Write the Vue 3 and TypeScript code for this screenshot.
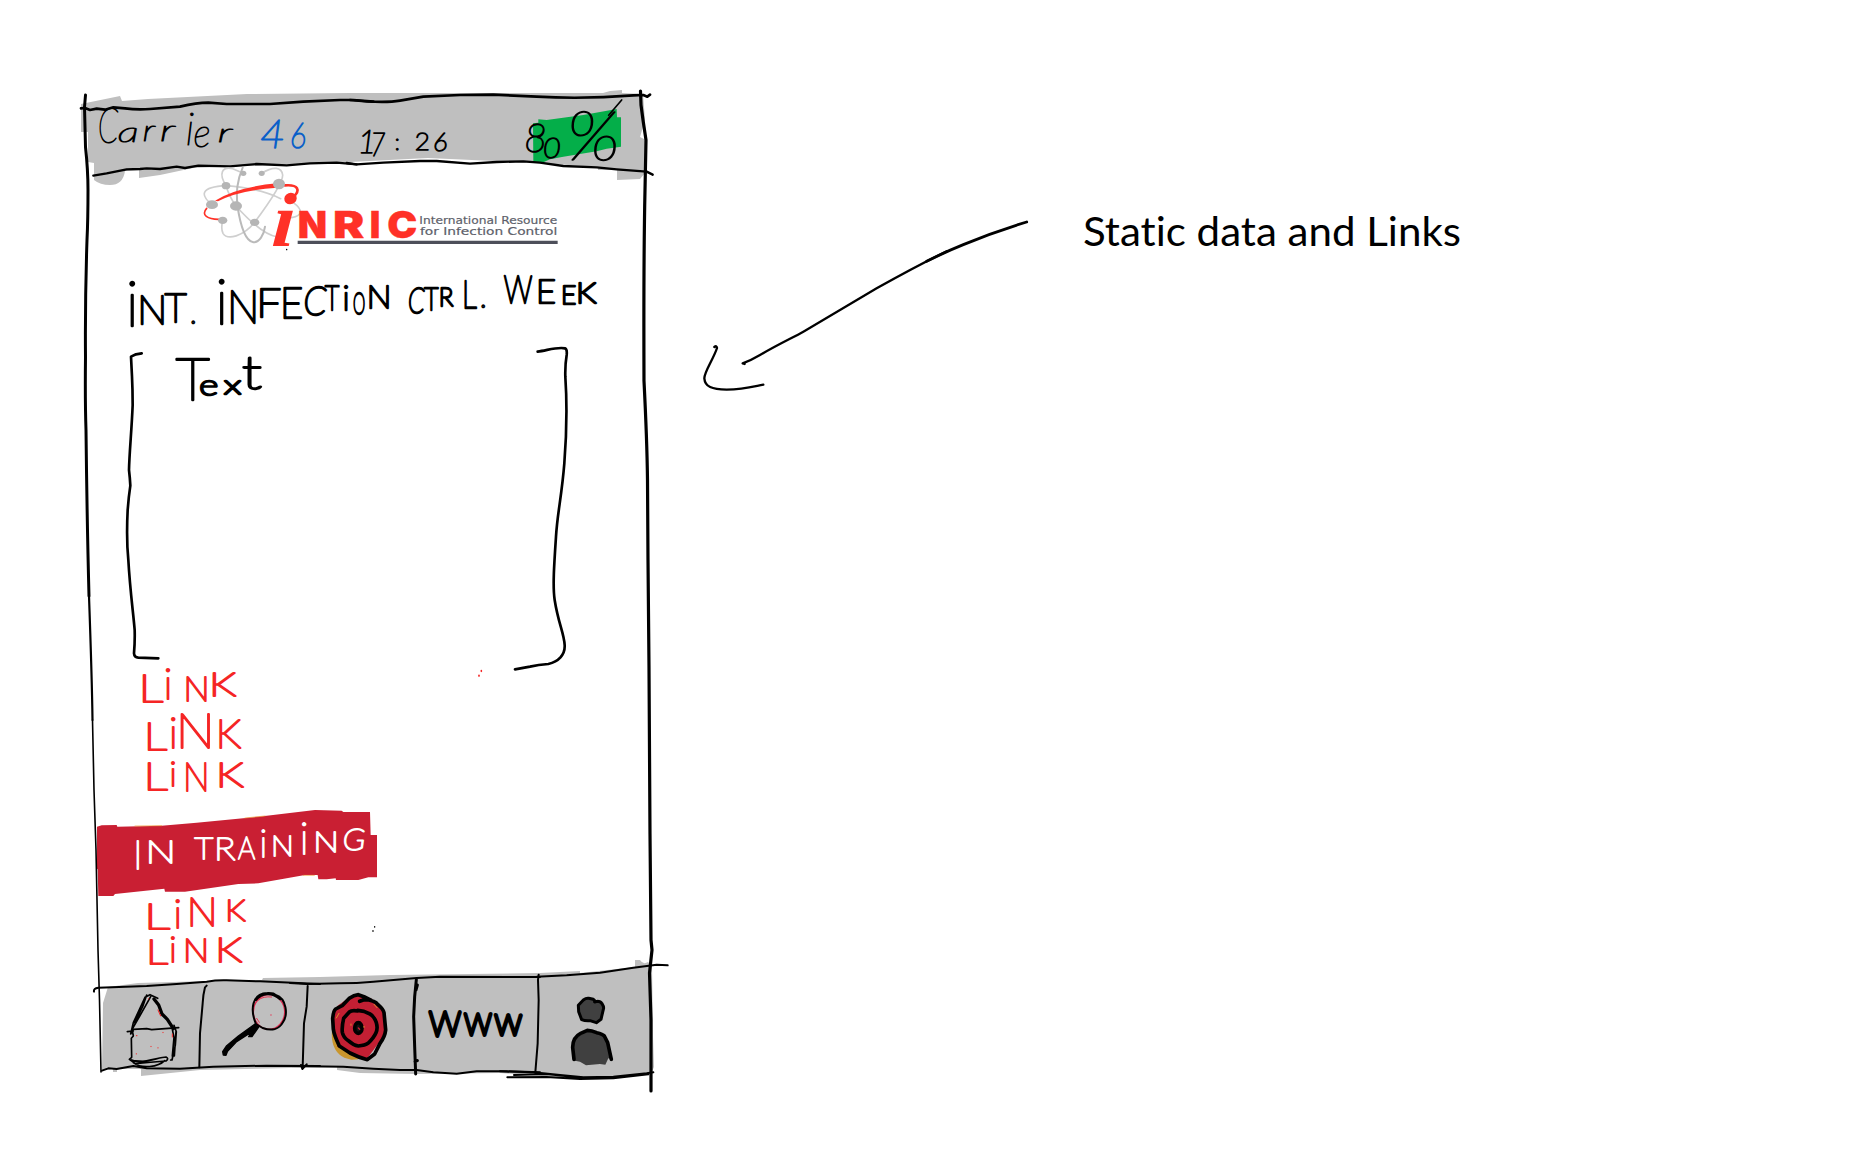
<script setup lang="ts">
import { h } from 'vue'

// One handwritten letter: character, the box its ink fills (left, right, top, bottom), slant.
type Glyph = [string, number, number, number, number, boolean?]
type Line = { pen: number; color: string; weight?: number; glyphs: Glyph[] }

const FAMILY = 'Lato, "Noto Sans", sans-serif'
const probe = document.createElement('canvas').getContext('2d')!

// Turns an ink box into the font size, origin and advance that fill it.
function fit([ch, left, right, top, bottom, slant]: Glyph, line: Line) {
  const half = line.pen / 2
  const l = left + half, r = Math.max(right - half, left + half + 1), t = top + half, b = bottom - half
  probe.font = `${slant ? 'italic ' : ''}${line.weight ?? 100} 200px ${FAMILY}`
  const m = probe.measureText(ch)
  const size = ((b - t) / (m.actualBoundingBoxAscent + m.actualBoundingBoxDescent)) * 200
  const k = size / 200
  const narrow = 'iI1.:'.includes(ch)
  const sx = narrow ? k : (r - l) / (m.actualBoundingBoxRight + m.actualBoundingBoxLeft)
  const inkMid = (m.actualBoundingBoxRight - m.actualBoundingBoxLeft) / 2
  return {
    x: (l + r) / 2 - inkMid * sx,
    y: b - m.actualBoundingBoxDescent * k,
    'font-size': size,
    'font-style': slant ? 'italic' : 'normal',
    textLength: m.width * sx,
    lengthAdjust: 'spacingAndGlyphs',
  }
}

const Ink = (props: { line: Line }) =>
  h(
    'text',
    {
      'font-family': FAMILY,
      'font-weight': props.line.weight ?? 100,
      fill: props.line.color,
      stroke: props.line.color,
      'stroke-width': props.line.pen,
      'stroke-linejoin': 'round',
      style: 'white-space: pre',
    },
    props.line.glyphs.map((g) => (g[0] === ' ' ? h('tspan', ' ') : h('tspan', fit(g, props.line), g[0]))),
  )
Ink.props = ['line']

const gap: Glyph = [' ', 0, 0, 0, 0]
const black = '#000'
const red = '#f52525'

const carrier: Line = {
  pen: 3.5, color: black, glyphs: [
    ['C', 88, 146, 78, 192, true], ['a', 147, 200, 143, 188, true], ['r', 222, 258, 138, 186, true], ['r', 275, 318, 138, 186, true],
    ['i', 345, 378, 97, 197, true], ['e', 374, 418, 136, 202, true], ['r', 448, 490, 143, 187, true],
  ],
}
const network: Line = { pen: 5, color: '#0a5fc9', glyphs: [['4', 573, 640, 117, 208, true], ['6', 664, 706, 124, 208, true]] }
const clock: Line = {
  pen: 4.5, color: black, glyphs: [
    ['1', 38, 62, 148, 222, true], ['7', 68, 106, 156, 230, true], [':', 134, 150, 178, 214], ['2', 197, 236, 155, 212], ['6', 253, 290, 157, 215, true],
  ],
}
const battery: Line = {
  pen: 4.5, color: black, glyphs: [['8', 528, 584, 128, 220, true], ['0', 582, 630, 173, 238, true], ['%', 664, 798, 92, 242, true]],
}
const title: Line = {
  pen: 7.5, color: black, glyphs: [
    ['i', 60, 74, 46, 186], ['N', 92, 162, 88, 182], ['T', 162, 232, 80, 174], ['.', 243, 256, 166, 178], gap,
    ['i', 327, 343, 41, 180], ['N', 362, 437, 73, 178], ['F', 450, 512, 68, 160], ['E', 520, 577, 68, 163],
    ['C', 584, 652, 62, 156, true], ['T', 642, 690, 62, 140], ['i', 702, 715, 58, 138], ['O', 728, 766, 80, 150], ['N', 778, 837, 58, 134], gap,
    ['C', 895, 946, 63, 149, true], ['T', 940, 988, 66, 140], ['R', 991, 1032, 63, 126], ['L', 1062, 1102, 43, 132], ['.', 1113, 1127, 119, 131], gap,
    ['W', 1180, 1268, 32, 119], ['E', 1286, 1336, 42, 119], ['E', 1358, 1398, 58, 120], ['K', 1406, 1461, 53, 118],
  ],
}
const body: Line = {
  pen: 7.5, color: black, glyphs: [['T', 195, 300, 278, 410], ['e', 271, 323, 344, 394], ['x', 342, 394, 343, 390], ['t', 398, 456, 276, 376]],
}
const link = (...boxes: number[][]): Line => ({
  pen: 6.5, color: red, glyphs: ['L', 'i', 'N', 'K'].map((c, n) => [c, ...boxes[n]] as Glyph),
})
const infoLinks = [
  link([99, 160, 73, 159], [165, 184, 56, 150], [229, 290, 75, 155], [309, 379, 66, 142]),
  link([114, 172, 218, 303], [183, 197, 204, 298], [212, 300, 190, 297], [328, 394, 206, 296]),
  link([114, 174, 336, 422], [183, 196, 333, 412], [228, 290, 334, 427], [330, 402, 335, 414]),
]
const trainingLinks = [
  link([192, 256, 335, 419], [268, 288, 324, 417], [316, 387, 319, 411], [429, 483, 328, 397]),
  link([195, 250, 446, 524], [258, 270, 437, 518], [303, 364, 443, 519], [402, 472, 441, 520]),
]
const training: Line = {
  pen: 5.5, color: '#fff', glyphs: [
    ['I', 152, 165, 150, 239], ['N', 193, 262, 150, 222], gap, ['T', 327, 386, 141, 209], ['R', 397, 452, 142, 213], ['A', 458, 512, 140, 211],
    ['i', 525, 545, 118, 203], ['N', 566, 619, 135, 200], ['i', 648, 668, 95, 196], ['N', 694, 753, 124, 190], ['G', 777, 839, 113, 184, true],
  ],
}
const www: Line = { pen: 12, color: black, glyphs: [['W', 414, 516, 179, 264], ['W', 519, 608, 185, 260], ['W', 611, 699, 189, 260]] }
</script>

<template>
  <main class="board">
    <section class="phone">
      <div class="screen">
        <header>
          <svg width="680" height="85" viewBox="0 80 680 85">
            <path fill="#bfbfbf" d="M81 104 L120 96 L122 101 L148 99 L247 94 L350 93 L603 93 L610 91 L622 90 L622 93 L643 94 L645 120 L640 137 L646 140 L645 173 L640 179 L617 180 L617 170 L598 170 L598 167 L537 163 L428 158 L350 162 L193 168 L160 175 L139 178 L139 170 L125 171 Q123 185 110 185 Q100 185 94 180 L94 163 L88 162 L88 132 L81 132Z" />
            <g transform="translate(70 80) scale(.33333)" class="pen">
              <path stroke-width="8" d="M33 85 L45 84 L60 90 L80 86 L105 89 L130 82 L165 85 Q200 90 240 87 L330 80 Q380 68 415 68 L470 72 L600 72 L700 65 L810 60 L850 60 L910 65" />
              <path stroke-width="7" d="M70 287 L110 280 L170 268 L210 267 L230 265 L270 267 L320 260 L345 264 L385 257 L480 259 L560 252 L650 256 L720 250 L800 248 L860 253" />
              <Ink :line="carrier" /><Ink :line="network" />
            </g>
            <g transform="translate(350 80) scale(.33333)" class="pen">
              <path fill="#04ae49" stroke="none" d="M549 130 L565 128 L565 118 L590 120 L700 105 L800 87 L801 112 L813 112 L813 200 L770 206 L740 214 L640 230 L600 238 L580 247 L550 245Z" />
              <path stroke-width="8" d="M0 60 Q100 70 150 62 L220 50 L330 45 L430 44 L560 50 Q700 58 850 46 L880 45 L892 50 L900 44" />
              <path stroke-width="7" d="M-10 249 L20 253 L100 248 L210 243 L260 243 L360 251 L440 246 L520 244 L570 248 L640 258 L740 262 L800 268 L890 275 L908 284" />
              <Ink :line="clock" /><Ink :line="battery" />
              <path stroke-width="5" d="M776 106 L815 60" />
            </g>
          </svg>
        </header>

        <div class="brand">
          <svg width="680" height="100" viewBox="0 165 680 100">
            <g transform="translate(190 155) scale(.33333)" class="pen">
              <g stroke="#cfcfcf" stroke-width="5">
                <path d="M108 92 C85 55 96 34 128 41 L160 55" />
                <path d="M215 55 C250 33 275 36 278 60 C279 80 240 140 194 202 C160 245 112 256 99 235 C92 220 95 210 98 196" />
                <path d="M66 149 C30 120 30 96 108 92 C170 97 230 110 272 131" />
                <path d="M310 143 C340 165 338 182 305 188" />
                <path d="M108 92 Q118 125 138 153 C180 200 225 240 262 246" />
              </g>
              <path stroke="#bababa" stroke-width="6" d="M158 38 C140 80 139 110 142 150 C150 205 165 258 190 262 C208 262 222 240 225 215" />
              <path stroke="#ff3127" stroke-width="5" d="M90 193 C52 194 32 180 50 160" />
              <path fill="#ff3127" stroke="none" d="M75 137 Q140 96 262 85 L262 98 Q145 106 84 139Z" />
              <path stroke="#ff3127" stroke-width="8" d="M285 91 C324 88 334 105 308 128" />
              <g fill="#b5b5b5" stroke="none">
                <ellipse cx="108" cy="92" rx="13" ry="11" /><ellipse cx="160" cy="55" rx="9" ry="8" /><ellipse cx="215" cy="55" rx="9" ry="8" />
                <ellipse cx="267" cy="87" rx="18" ry="16" /><ellipse cx="66" cy="149" rx="18" ry="13" /><ellipse cx="138" cy="153" rx="18" ry="14" />
                <ellipse cx="98" cy="196" rx="14" ry="11" /><ellipse cx="194" cy="202" rx="14" ry="11" />
              </g>
              <text class="logo-i" transform="translate(242 274) skewX(-4) scale(1.08 1)">i</text>
              <text class="logo-name" y="249"><tspan x="323" textLength="88" lengthAdjust="spacingAndGlyphs">N</tspan><tspan x="429" textLength="94" lengthAdjust="spacingAndGlyphs">R</tspan><tspan x="539">I</tspan><tspan x="592" textLength="90" lengthAdjust="spacingAndGlyphs">C</tspan></text>
              <text class="logo-sub" x="688" y="206" textLength="414" lengthAdjust="spacingAndGlyphs">International Resource</text>
              <text class="logo-sub" x="690" y="239" textLength="412" lengthAdjust="spacingAndGlyphs">for Infection Control</text>
              <path stroke="#4d4f5a" stroke-width="10" stroke-linecap="butt" d="M323 262 H1103" />
              <path stroke-width="4" d="M290 283 v1" />
            </g>
          </svg>
        </div>

        <div class="content">
          <svg width="680" height="410" viewBox="0 265 680 410">
            <g transform="translate(110 265) scale(.33333)"><Ink :line="title" /><Ink :line="body" /></g>
            <g transform="translate(100 340) scale(.33333)" class="pen" stroke-width="8">
              <path d="M125 40 L108 43 L93 50 L96 110 Q98 150 98 195 C95 270 88 340 87 390 Q90 415 91 437 Q86 470 83 510 C80 570 80 610 85 660 C90 750 100 820 104 870 Q105 905 102 940 Q103 952 115 953 L175 955" />
              <path d="M1313 35 C1340 32 1370 20 1395 25 Q1402 28 1400 45 Q1395 75 1396 110 C1402 200 1400 280 1393 370 C1385 470 1372 520 1368 590 C1362 680 1358 740 1364 780 C1375 850 1392 880 1394 915 C1396 945 1375 965 1345 972 Q1315 974 1290 980 L1245 988" />
            </g>
          </svg>
        </div>

        <nav class="links">
          <svg width="680" height="125" viewBox="0 675 680 125">
            <g transform="translate(110 650) scale(.33333)" class="pen">
              <Ink v-for="(l, n) in infoLinks" :key="n" :line="l" />
              <path :stroke="red" stroke-width="5" d="M1114 62 v2 M1107 76 v2" />
            </g>
          </svg>
        </nav>

        <nav class="training">
          <svg width="680" height="160" viewBox="0 800 680 160">
            <g transform="translate(85 790) scale(.33333)" class="pen">
              <path fill="#c91f33" stroke="none" d="M36 110 L50 106 L95 105 L97 110 L230 107 L335 98 L520 80 L690 60 L770 62 L775 66 L855 66 L857 135 L876 135 L876 262 L850 262 L820 270 L753 270 L752 265 L725 268 L700 268 L698 255 L660 255 L520 280 L460 282 L300 305 L240 305 L238 296 L90 312 L85 318 L40 318 L38 238 L36 236Z" />
              <path stroke="#ef9a35" stroke-width="2" d="M150 108 L230 107 M480 84 L540 78 M655 256 L688 256" />
              <Ink :line="training" />
              <Ink v-for="(l, n) in trainingLinks" :key="n" :line="l" />
              <path stroke-width="4" d="M869 410 v1 M864 422 v2" />
            </g>
          </svg>
        </nav>

        <footer>
          <svg width="680" height="150" viewBox="0 960 680 150">
            <path fill="#bfbfbf" d="M108 987 L138 983 L207 981 L262 980 L263 978 L320 977 L390 975 L540 973 L580 971 L580 973 L635 967 L635 960 L640 960 Q643 965 648 962 L652 966 L653 1037 L654 1067 L651 1074 L600 1079 L567 1078 L500 1073 L417 1074 L360 1073 L337 1070 L337 1067 L200 1070 L141 1076 L141 1069 L117 1069 L117 1072 L113 1072 L113 1069 L102 1070 L103 1003Z" />
            <g transform="translate(80 950) scale(.33333)" class="pen" stroke-width="6">
              <path d="M42 125 Q40 115 55 113 L200 108 L290 102 L380 95 Q410 90 440 91 L540 94 L720 102" />
              <path d="M66 362 L85 355 L110 357 L160 348 L200 355 L300 356 L400 350 L560 347 L720 348" />
              <path d="M380 107 L375 112 Q369 135 368 160 L360 250 L358 352" />
              <path d="M683 108 L680 170 L672 220 L668 352 M663 345 L667 357 L680 343" />
              <!-- home -->
              <path stroke-width="5" d="M152 252 L160 218 L195 142 L210 134 L233 145 M155 240 L180 197 L212 140 M164 218 L188 170 L200 135 M152 252 L160 238 L200 236 L215 239 L296 233 M142 245 L160 243" />
              <path stroke-width="10" d="M222 147 L236 165 L246 192 L262 208 L280 236" />
              <path stroke-width="5" d="M282 226 L289 245 L286 285 L276 330 L272 330 M277 238 L282 262 L277 318 M288 245 L283 318" />
              <path stroke-width="5" d="M157 242 L160 258 L154 265 L155 322 L148 328 L165 340 M155 330 C180 345 235 322 258 321 Q268 326 258 333 C230 335 195 338 165 341 M160 338 C185 358 235 351 254 332 M155 332 L190 334" />
              <path :stroke="red" stroke-width="3" d="M234 180 L242 198 M206 146 v1 M169 257 h2 M249 247 v1 M277 252 v9 M213 289 v1 M234 293 v1 M169 311 v1" />
              <!-- search -->
              <ellipse cx="567" cy="186" rx="47" ry="52" stroke="#e0284e" stroke-width="4" />
              <path d="M528 222 C510 180 515 130 562 129 Q582 128 587 135 C620 145 625 195 608 218 C598 238 575 243 548 234 L528 222 M528 150 C545 130 575 125 600 148" />
              <path stroke-width="3" stroke="#e63250" d="M530 205 l8 12 M573 194 v2 M535 150 Q550 138 575 141" />
              <path fill="#000" stroke-width="4" d="M428 305 L440 287 L475 258 L525 222 L537 230 L516 260 L506 260 L515 246 L470 275 L442 305 L438 316 L430 315Z" />
            </g>
            <g transform="translate(290 950) scale(.33333)" class="pen" stroke-width="6">
              <path d="M0 99 L50 102 L150 100 Q200 100 250 95 L380 84 L450 80 L750 81" />
              <path d="M0 348 L160 350 L250 356 L330 360 L380 360 L430 367 L500 371 L560 364 L650 364 L750 367" />
              <path stroke-width="9" d="M379 89 L374 140 L371 200 L374 290 L377 372 M382 105 L378 120 M382 332 L375 335" />
              <!-- target -->
              <path fill="#c9962d" stroke="none" d="M126 240 C122 280 135 322 185 329 L205 328 L160 270Z" />
              <path fill="#c31f33" stroke="none" d="M208 135 L170 148 L142 168 L128 210 L142 290 L228 330 L288 250 L285 190 L245 146Z" />
              <path stroke-width="11" d="M209 154 L222 149 Q255 150 264 164 Q280 178 282 188 L287 240 Q285 260 270 280 L254 312 L232 329 Q205 322 180 309 L148 288 Q132 255 130 238 L128 206 Q130 182 137 177 L158 166 L178 145 Q192 135 205 134 L222 140 L244 151" />
              <path stroke-width="11" d="M203 183 Q185 180 178 186 L161 205 Q155 230 157 247 Q160 262 175 272 Q190 286 205 288 Q225 286 235 279 Q252 262 258 248 Q264 235 259 218 Q252 198 240 192 L222 184 L203 181" />
              <ellipse cx="205" cy="234" rx="11" ry="16" fill="#111" stroke-width="11" />
              <path stroke="#c31f33" stroke-width="4" d="M205 234 l4 4" />
              <path stroke="#d7902b" stroke-width="3" d="M139 204 l8 -14 M183 222 v4 M252 163 l9 10 M222 229 v3" />
              <Ink :line="www" />
            </g>
            <g transform="translate(500 940) scale(.33333)" class="pen" stroke-width="6">
              <path d="M0 111 L110 110 L200 106 L300 98 L400 83 L470 74 L503 76" />
              <path d="M0 394 L100 397 L180 405 L250 412 L340 410 L440 400 L460 397 M22 412 L140 411 L240 417 L340 415 L445 403 M42 405 L140 402 L250 414" />
              <path d="M116 104 L114 120 L116 180 L113 310 L106 397" />
              <!-- profile -->
              <path fill="#404040" stroke-width="9" d="M284 186 L292 184 Q302 184 306 191 Q313 202 310 208 L303 238 L289 248 L270 242 Q255 243 245 239 L236 215 L235 196 L250 180 Q258 174 266 175 L280 178 L286 184Z" />
              <path fill="#404040" stroke="none" d="M220 362 L220 300 L262 272 L315 288 L335 358 L325 355 L316 374 L300 372 L258 376 L240 365 L225 362Z" />
              <path stroke-width="11" d="M222 358 L218 322 Q218 292 242 280 L262 271 Q275 271 290 278 Q308 282 313 288 L323 308 L334 358" />
            </g>
          </svg>
        </footer>
      </div>

      <svg class="frame pen" width="680" height="1030" viewBox="0 80 680 1030">
        <path stroke-width="3" d="M85.500 95 L84.500 107 L85.500 147 Q88 170 88 190 Q88 220 87 240 Q85 300 85.500 357 Q85 400 86 430 Q87 520 89 596" />
        <path stroke-width="2.200" d="M89 596 Q92 680 92.500 720" />
        <path stroke-width="1.600" d="M92.500 720 L94 790 L96 850 L98 950 L99.500 1000 L101 1072" />
        <path stroke-width="3.200" d="M640.500 91 L641 105 L643 120 L646 140 L645 190 Q643.500 260 644 381 Q647 440 647.500 480 L648 560 L649 667 L650 834 L651 940 L652 950 L649.500 973 L651 1020 L651 1073 L651 1091" />
      </svg>
    </section>

    <aside class="note">
      <svg width="370" height="210" viewBox="0 0 1110 630" class="pen">
        <path stroke-width="7" d="M194 492 L188 490 Q215 480 240 465 C290 435 340 412 370 395 L590 265 C670 220 730 188 800 154" />
        <path stroke-width="8.500" d="M740 184 C780 164 820 146 850 134 Q940 96 1040 66" />
        <path stroke-width="7" d="M103 441 Q110 435 111 444 C100 478 73 515 73 535 C75 560 95 568 140 569 C190 568 210 562 250 554" />
      </svg>
      <p class="caption"><svg width="390" height="50" viewBox="0 390 390 50"><text x="1" y="428" textLength="378" lengthAdjust="spacingAndGlyphs">Static data and Links</text></svg></p>
    </aside>
  </main>
</template>

<style>
body {
  margin: 0;
  background: #fff;
}
</style>

<style scoped>
.board {
  display: flex;
  align-items: flex-start;
  box-sizing: border-box;
  width: 1868px;
  height: 1174px;
  padding-top: 80px;
  overflow: hidden;
  background: #fff;
}
.phone {
  display: grid;
  width: 680px;
  flex: none;
}
.screen,
.frame {
  grid-area: 1 / 1;
}
.screen {
  display: flex;
  flex-direction: column;
}
svg {
  display: block;
  overflow: visible;
}
.pen {
  fill: none;
  stroke: #000;
  stroke-linecap: round;
  stroke-linejoin: round;
}
.logo-i {
  fill: #ff3127;
  stroke: none;
  font: italic bold 230px "Liberation Serif", serif;
}
.logo-name {
  fill: #ff3127;
  stroke: #ff3127;
  stroke-width: 1px;
  font: 900 109px Inter, "Liberation Sans", sans-serif;
}
.logo-sub {
  fill: #5d5f6a;
  stroke: #5d5f6a;
  stroke-width: 0.6px;
  font: 33px "DejaVu Sans", sans-serif;
}
.note {
  display: flex;
  align-items: flex-start;
  gap: 32px;
  margin-top: 120px;
}
.caption {
  margin: 8px 0 0;
  font: 41px Lato, sans-serif;
  font-variant-ligatures: none;
}
</style>
